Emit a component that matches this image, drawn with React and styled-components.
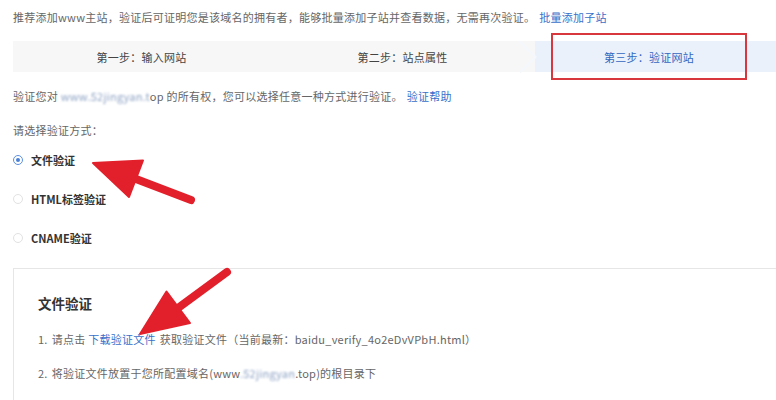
import styled, { createGlobalStyle } from "styled-components";

const GlobalStyle = createGlobalStyle`
    html, body {
        margin: 0;
        padding: 0;
        background: #ffffff;
    }

    body {
        font-family: "Noto Sans CJK SC", "Noto Sans", sans-serif;
        font-size: 11px;
        letter-spacing: 0.25px;
        color: #666666;
    }
`

const Page = styled.div`
    position: relative;
    width: 776px;
    height: 400px;
    overflow: hidden;
    padding-left: 13px;
    box-sizing: border-box;
`

const Intro = styled.p`
    margin: 0;
    height: 34px;
    line-height: 34px;
    white-space: nowrap;
    color: #666666;
`

const Link = styled.a`
    color: #3a6fc9;
    text-decoration: none;
    margin-left: ${(p) => (p.$gap ? "4px" : "0")};
    margin-right: ${(p) => (p.$after ? "4px" : "0")};
`

const Steps = styled.div`
    margin-top: 7px;
    display: flex;
    height: 31px;
    margin-right: -13px;
`

const Step = styled.div`
    position: relative;
    width: ${(p) => p.$width};
    flex: ${(p) => (p.$grow ? "1" : "none")};
    display: flex;
    align-items: center;
    justify-content: ${(p) => (p.$active ? "flex-start" : "center")};
    background: ${(p) => (p.$active ? "#eaf1fb" : "#f7f7f7")};
    color: #444444;

    &::after {
        content: "";
        display: ${(p) => (p.$chevron ? "block" : "none")};
        position: absolute;
        right: 3px;
        top: 50%;
        width: 21px;
        height: 21px;
        border-top: 2px solid #f4f7fc;
        border-right: 2px solid #f4f7fc;
        transform: translateY(-50%) rotate(45deg);
        z-index: 1;
    }
`

const ActiveLabel = styled.div`
    margin: -8px 0 -8px 16px;
    width: 196px;
    height: 47px;
    box-sizing: border-box;
    border: 2px solid #d8383d;
    display: flex;
    align-items: center;
    justify-content: center;
    color: #3467bf;
`

const Line = styled.p`
    margin: ${(p) => p.$top || "0"} 0 0;
    height: 20px;
    line-height: 20px;
    white-space: nowrap;
    color: ${(p) => p.$color || "#666666"};
`

const Num = styled.span`
    margin-right: 4px;
`

const Blur = styled.span`
    color: #8ea3c4;
    filter: blur(1.1px);
`

const Options = styled.div`
    display: flex;
    flex-direction: column;
`

const Option = styled.label`
    height: 39px;
    display: flex;
    align-items: center;
    gap: 8px;
    font-weight: 700;
    letter-spacing: 0;
    color: #333333;
`

const Radio = styled.span`
    width: 10px;
    height: 10px;
    box-sizing: border-box;
    border-radius: 50%;
    border: 1px solid ${(p) => (p.$checked ? "#5c8fe0" : "#e2e2e2")};
    display: flex;
    align-items: center;
    justify-content: center;

    &::after {
        content: "";
        display: ${(p) => (p.$checked ? "block" : "none")};
        width: 4px;
        height: 4px;
        border-radius: 50%;
        background: #4a7fd6;
    }
`

const Panel = styled.section`
    margin-top: 11px;
    border-top: 1px solid #e6e6e6;
    border-left: 1px solid #e6e6e6;
    padding: 23px 0 0 24px;
    height: 200px;
    margin-right: -13px;
`

const PanelTitle = styled.h3`
    margin: 0;
    height: 22px;
    line-height: 22px;
    font-size: 13.5px;
    font-weight: 700;
    letter-spacing: 0;
    color: #333333;
`

const Arrows = styled.svg`
    position: absolute;
    left: 0;
    top: 0;
    pointer-events: none;
`

const RedArrow = ({ head, from, to }) => (
    <g fill="#e2202b" stroke="#e2202b">
        <polygon points={head} strokeWidth="2" strokeLinejoin="round" />
        <line x1={from[0]} y1={from[1]} x2={to[0]} y2={to[1]} strokeWidth="8" strokeLinecap="round" />
    </g>
)

const App = () => {
    return (
        <Page>
            <GlobalStyle />
            <Intro>
                推荐添加www主站，验证后可证明您是该域名的拥有者，能够批量添加子站并查看数据，无需再次验证。
                <Link href="#" $gap>批量添加子站</Link>
            </Intro>

            <Steps>
                <Step $width="257px">第一步：输入网站</Step>
                <Step $width="265px" $chevron>第二步：站点属性</Step>
                <Step $active $grow>
                    <ActiveLabel>第三步：验证网站</ActiveLabel>
                </Step>
            </Steps>

            <Line $top="14px">
                验证您对 <Blur>www.52jingyan.t</Blur>op 的所有权，您可以选择任意一种方式进行验证。
                <Link href="#" $gap>验证帮助</Link>
            </Line>

            <Line $top="14px">请选择验证方式：</Line>

            <Options>
                <Option><Radio $checked />文件验证</Option>
                <Option><Radio />HTML标签验证</Option>
                <Option><Radio />CNAME验证</Option>
            </Options>

            <Panel>
                <PanelTitle>文件验证</PanelTitle>
                <Line $top="15px">
                    <Num>1.</Num>请点击 <Link href="#" $after>下载验证文件</Link>获取验证文件（当前最新：baidu_verify_4o2eDvVPbH.html）
                </Line>
                <Line $top="14px">
                    <Num>2.</Num>将验证文件放置于您所配置域名(www<Blur>.52jingyan</Blur>.top)的根目录下
                </Line>
            </Panel>

            <Arrows width="776" height="400" viewBox="0 0 776 400">
                <RedArrow head="93,163 143,160.5 129,197" from={[136, 179]} to={[191, 200]} />
                <RedArrow head="140,334 166.5,291.5 190,323" from={[178, 308]} to={[227, 272]} />
            </Arrows>
        </Page>
    )
}

export default App;
